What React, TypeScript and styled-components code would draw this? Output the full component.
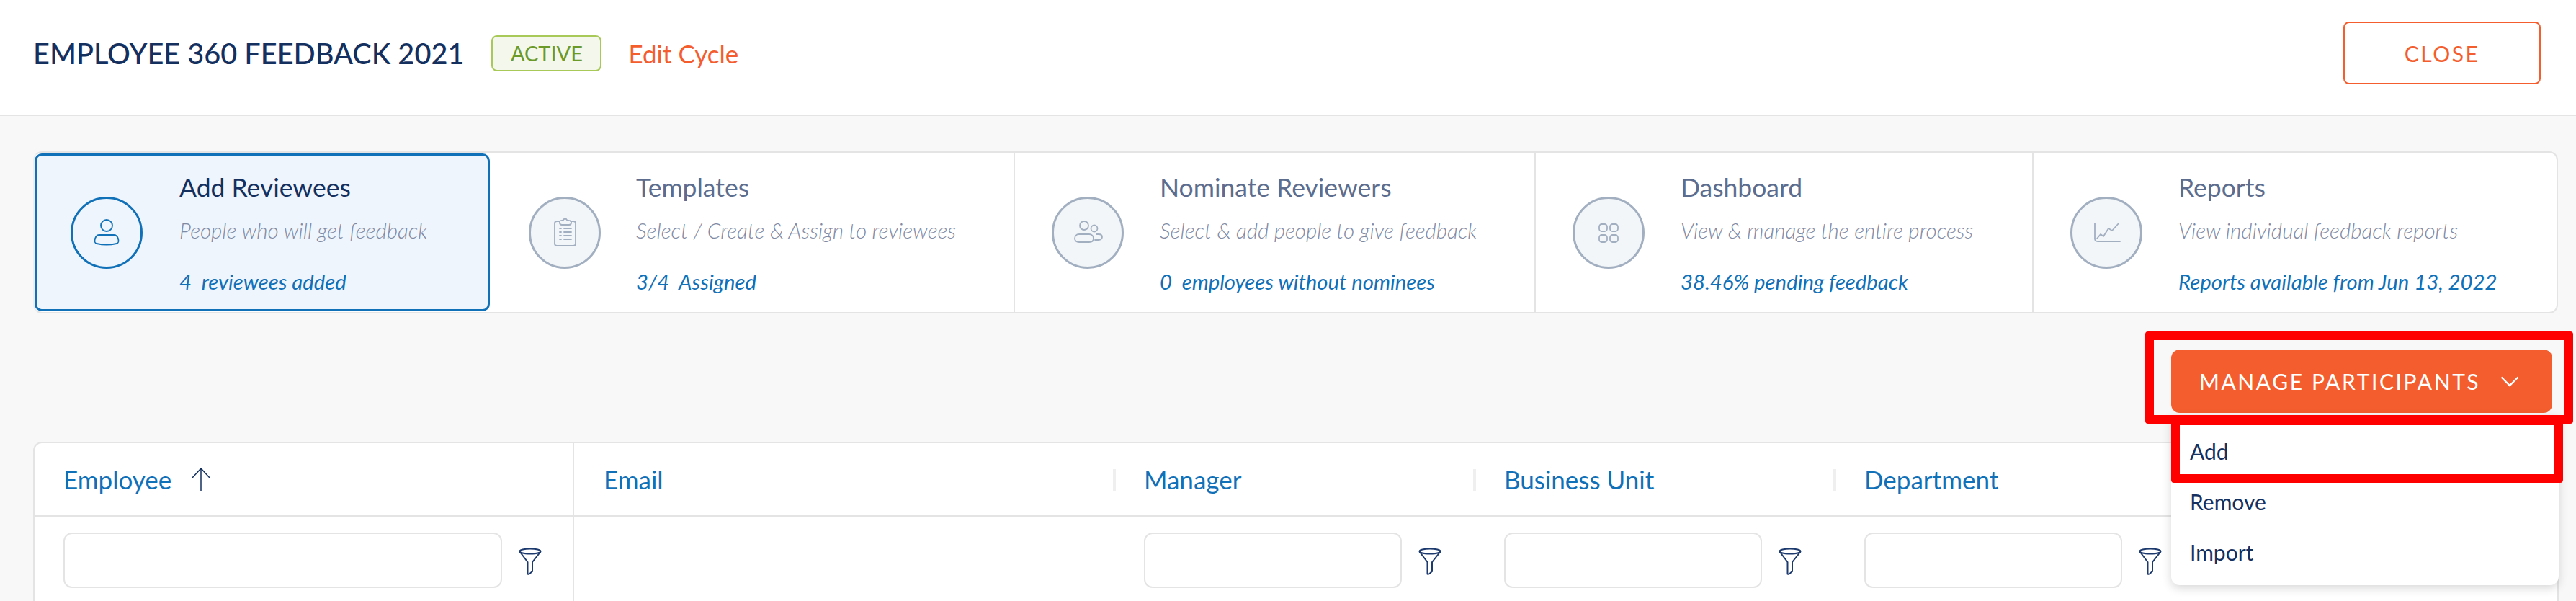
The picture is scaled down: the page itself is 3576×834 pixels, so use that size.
import React from "react";
import styled, { createGlobalStyle } from "styled-components";

const Global = createGlobalStyle`
  html, body { margin: 0; padding: 0; height: 834px; overflow: hidden; background: #f8f8f8; }
  body { font-family: Lato, "Liberation Sans", sans-serif; }
  * { box-sizing: border-box; }
`;

const Page = styled.div`
  position: relative;
  width: 3576px;
  height: 834px;
  overflow: hidden;
  background: #f8f8f8;
`;

const Header = styled.header`
  height: 161px;
  background: #fff;
  border-bottom: 2px solid #e4e4e4;
  padding: 0 49px 12px 46px;
  display: flex;
  align-items: center;
`;

const Title = styled.h1`
  margin: 0;
  font-size: 39.7px;
  font-weight: 500;
  color: #14305f;
  white-space: nowrap;
`;

const Badge = styled.span`
  margin-left: 38px;
  width: 153px;
  height: 50px;
  border: 2px solid #a8c957;
  border-radius: 8px;
  background: #f4f8ec;
  color: #6b9a2a;
  font-size: 29px;
  display: flex;
  align-items: center;
  justify-content: center;
`;

const EditLink = styled.a`
  margin-left: 37px;
  font-size: 35px;
  color: #f45d2e;
`;

const CloseButton = styled.button`
  margin-left: auto;
  width: 274px;
  height: 87px;
  border: 2px solid #f45d2e;
  border-radius: 8px;
  background: #fff;
  color: #f45d2e;
  font-family: inherit;
  font-size: 30px;
  letter-spacing: 2.5px;
`;

const Main = styled.main`
  padding: 49px 25px 0 46px;
`;

const Stepper = styled.section`
  height: 225px;
  display: grid;
  grid-template-columns: 632px 727px 723px 691px 1fr;
  background: #fff;
  border: 2px solid #e4e4e4;
  border-left-color: #eee;
  border-radius: 12px;
`;

const Step = styled.div<{ $active?: boolean }>`
  display: flex;
  align-items: center;
  height: 100%;
  padding-left: 51px;
  gap: 50px;
  border-left: 2px solid #e4e4e4;
  &:nth-child(2) {
    border-left: 0;
    padding-left: 54px;
    gap: 49px;
  }
  ${(p) =>
    p.$active &&
    `
    height: 219px;
    margin: 1px 0;
    padding-left: 47px;
    gap: 51px;
    border: 3px solid #1070b8;
    border-radius: 10px;
    background: #eff5fc;
  `}
`;

const StepCircle = styled.div<{ $active?: boolean }>`
  flex: none;
  width: 100px;
  height: 100px;
  border-radius: 50%;
  border: 3px solid ${(p) => (p.$active ? "#1070b8" : "#a2afc1")};
  background: ${(p) => (p.$active ? "transparent" : "#f3f6f8")};
  color: ${(p) => (p.$active ? "#1070b8" : "#a2afc1")};
  display: flex;
  align-items: center;
  justify-content: center;
`;

const StepText = styled.div`
  display: flex;
  flex-direction: column;
  white-space: nowrap;
  padding-bottom: 4px;
`;

const StepTitle = styled.div<{ $active?: boolean }>`
  margin-top: 8px;
  font-size: 35.5px;
  line-height: 44px;
  color: ${(p) => (p.$active ? "#14305f" : "#5c6d8e")};
`;

const StepSub = styled.div`
  margin-top: 18px;
  font-size: 29.6px;
  line-height: 40px;
  font-style: italic;
  font-weight: 300;
  color: #7f8aa3;
`;

const StepLink = styled.div`
  margin-top: 31px;
  font-size: 29.3px;
  line-height: 40px;
  font-style: italic;
  color: #1070b8;
  white-space: pre;
`;

const Toolbar = styled.div`
  margin-top: 50px;
  padding-right: 8px;
  display: flex;
  justify-content: flex-end;
`;

const ManageButton = styled.button`
  width: 529px;
  height: 88px;
  border: 0;
  border-radius: 12px;
  background: #f45d2e;
  color: #fff;
  font-family: inherit;
  font-size: 30px;
  letter-spacing: 2.6px;
  display: flex;
  align-items: center;
  padding: 0 46px 0 39px;
  justify-content: space-between;
  white-space: nowrap;
`;

const Table = styled.section`
  margin-top: 40px;
  margin-right: -1px;
  background: #fff;
  border: 2px solid #e4e4e4;
  border-bottom: 0;
  border-radius: 12px 0 0 0;
  height: 300px;
`;

const Row = styled.div<{ $head?: boolean }>`
  display: grid;
  grid-template-columns: 749px 748px 500px 500px 500px;
  height: ${(p) => (p.$head ? "102px" : "auto")};
  border-bottom: ${(p) => (p.$head ? "2px solid #e4e4e4" : "0")};
`;

const HeadCell = styled.div<{ $first?: boolean; $line?: boolean; $pad: number }>`
  position: relative;
  display: flex;
  align-items: center;
  gap: 28px;
  padding-left: ${(p) => p.$pad}px;
  border-right: ${(p) => (p.$first ? "2px solid #e4e4e4" : "0")};
  font-size: 35px;
  color: #1070b8;
  &::before {
    content: "";
    display: ${(p) => (p.$line ? "block" : "none")};
    position: absolute;
    left: 0;
    top: 36px;
    width: 4px;
    height: 31px;
    background: #efefef;
  }
`;

const FilterCell = styled.div<{ $first?: boolean }>`
  display: flex;
  align-items: center;
  height: 120px;
  padding-left: ${(p) => (p.$first ? "40px" : "43px")};
  gap: 23px;
  border-right: ${(p) => (p.$first ? "2px solid #e4e4e4" : "0")};
`;

const FilterInput = styled.div<{ $w: number }>`
  width: ${(p) => p.$w}px;
  height: 77px;
  border: 2px solid #e4e4e4;
  border-radius: 12px;
  background: #fff;
`;

const FunnelSvg = styled.svg`
  margin-top: 4px;
  fill: none;
  stroke: #1d3a6e;
  stroke-width: 2;
  stroke-linejoin: round;
`;

const Menu = styled.div`
  position: absolute;
  left: 3014px;
  top: 576px;
  width: 538px;
  height: 236px;
  background: #fff;
  border-radius: 0 0 12px 12px;
  box-shadow: 0 4px 14px rgba(0, 0, 0, 0.16);
  padding-top: 28px;
`;

const MenuItem = styled.div`
  height: 70px;
  padding-left: 26px;
  font-size: 30px;
  line-height: 44px;
  color: #14305f;
`;

const RedBox = styled.div<{ $l: number; $t: number; $w: number; $h: number }>`
  position: absolute;
  left: ${(p) => p.$l}px;
  top: ${(p) => p.$t}px;
  width: ${(p) => p.$w}px;
  height: ${(p) => p.$h}px;
  border: 12px solid #ff0000;
  border-radius: 4px;
`;

const IconSvg = styled.svg`
  display: block;
  fill: none;
  stroke: currentColor;
  stroke-width: 1.8;
  stroke-linecap: round;
  stroke-linejoin: round;
`;

const Person = () => (
  <IconSvg width="48" height="48" viewBox="0 0 48 48">
    <circle cx="24" cy="14" r="8" />
    <path d="M14 27h20c3 0 5 2 6 5 1 4 1 6-2 7-9 2-19 2-28 0-3-1-3-3-2-7 1-3 3-5 6-5z" />
  </IconSvg>
);
const Clipboard = () => (
  <IconSvg width="48" height="48" viewBox="0 0 48 48">
    <path d="M17 8h-4c-2 0-3 1-3 3v28c0 2 1 3 3 3h23c2 0 3-1 3-3V11c0-2-1-3-3-3h-4" />
    <path d="M17 9c0-2 1-2 3-2 1 0 2 0 3-2 1-1 2-1 3 0 1 2 2 2 3 2 3 0 4 0 4 2v1c0 2-1 3-3 3H20c-2 0-3-1-3-3z" />
    <path d="M17 18h2M23 18h10M17 23h2M23 23h10M17 28h2M23 28h10M17 33h2M23 33h10" />
  </IconSvg>
);
const Group = () => (
  <IconSvg width="48" height="48" viewBox="0 0 48 48">
    <circle cx="19" cy="14" r="6" />
    <circle cx="33" cy="18" r="4.5" />
    <path d="M12 26h14c4 0 6 3 6 6s-2 5-6 5H12c-4 0-6-2-6-5s2-6 6-6z" />
    <path d="M36 26h3c4 0 5 2 5 4s-2 4-5 4h-5" />
  </IconSvg>
);
const Tiles = () => (
  <IconSvg width="48" height="48" viewBox="0 0 48 48">
    <rect x="11" y="12" width="11" height="10" rx="3.5" />
    <rect x="26" y="12" width="11" height="10" rx="3.5" />
    <rect x="11" y="27" width="11" height="10" rx="3.5" />
    <rect x="26" y="27" width="11" height="10" rx="3.5" />
  </IconSvg>
);
const Chart = () => (
  <IconSvg width="48" height="48" viewBox="0 0 48 48">
    <path d="M8 11v21c0 3 1 4 4 4h31" />
    <path d="M11 32l5-6 4 3 7-11 5 3 9-10" />
  </IconSvg>
);
const Funnel = () => (
  <FunnelSvg width="32" height="38" viewBox="0 0 32 38">
    <ellipse cx="16" cy="5" rx="14.5" ry="3.5" />
    <path d="M1.5 5.5L12.5 20V36.5c2 .5 3 0 4-1.5l2.5-2V20L30.5 5.5" />
  </FunnelSvg>
);
const Arrow = () => (
  <svg width="26" height="32" viewBox="0 0 26 32" fill="none" stroke="#14305f" strokeWidth="1.5">
    <path d="M13 32V1M1 14L13 1l12 13" />
  </svg>
);
const Chevron = () => (
  <svg width="26" height="15" viewBox="0 0 26 15" fill="none" stroke="#fff" strokeWidth="2.4">
    <path d="M1.5 1.5L13 13 24.5 1.5" />
  </svg>
);

const steps = [
  { title: "Add Reviewees", sub: "People who will get feedback", link: "4  reviewees added", Icon: Person, active: true },
  { title: "Templates", sub: "Select / Create & Assign to reviewees", link: "3/4  Assigned", Icon: Clipboard },
  { title: "Nominate Reviewers", sub: "Select & add people to give feedback", link: "0  employees without nominees", Icon: Group },
  { title: "Dashboard", sub: "View & manage the entire process", link: "38.46% pending feedback", Icon: Tiles },
  { title: "Reports", sub: "View individual feedback reports", link: "Reports available from Jun 13, 2022", Icon: Chart },
];

export default function App() {
  return (
    <Page>
      <Global />
      <Header>
        <Title>EMPLOYEE 360 FEEDBACK 2021</Title>
        <Badge>ACTIVE</Badge>
        <EditLink>Edit Cycle</EditLink>
        <CloseButton>CLOSE</CloseButton>
      </Header>
      <Main>
        <Stepper>
          {steps.map(({ title, sub, link, Icon, active }) => (
            <Step key={title} $active={active}>
              <StepCircle $active={active}>
                <Icon />
              </StepCircle>
              <StepText>
                <StepTitle $active={active}>{title}</StepTitle>
                <StepSub>{sub}</StepSub>
                <StepLink>{link}</StepLink>
              </StepText>
            </Step>
          ))}
        </Stepper>
        <Toolbar>
          <ManageButton>
            MANAGE PARTICIPANTS
            <Chevron />
          </ManageButton>
        </Toolbar>
        <Table>
          <Row $head>
            <HeadCell $first $pad={40}>
              Employee
              <Arrow />
            </HeadCell>
            <HeadCell $pad={41}>Email</HeadCell>
            <HeadCell $line $pad={43}>Manager</HeadCell>
            <HeadCell $line $pad={43}>Business Unit</HeadCell>
            <HeadCell $line $pad={43}>Department</HeadCell>
          </Row>
          <Row>
            <FilterCell $first>
              <FilterInput $w={609} />
              <Funnel />
            </FilterCell>
            <FilterCell />
            <FilterCell>
              <FilterInput $w={358} />
              <Funnel />
            </FilterCell>
            <FilterCell>
              <FilterInput $w={358} />
              <Funnel />
            </FilterCell>
            <FilterCell>
              <FilterInput $w={358} />
              <Funnel />
            </FilterCell>
          </Row>
        </Table>
      </Main>
      <Menu>
        <MenuItem>Add</MenuItem>
        <MenuItem>Remove</MenuItem>
        <MenuItem>Import</MenuItem>
      </Menu>
      <RedBox $l={2978} $t={460} $w={594} $h={128} />
      <RedBox $l={3014} $t={578} $w={544} $h={92} />
    </Page>
  );
}
